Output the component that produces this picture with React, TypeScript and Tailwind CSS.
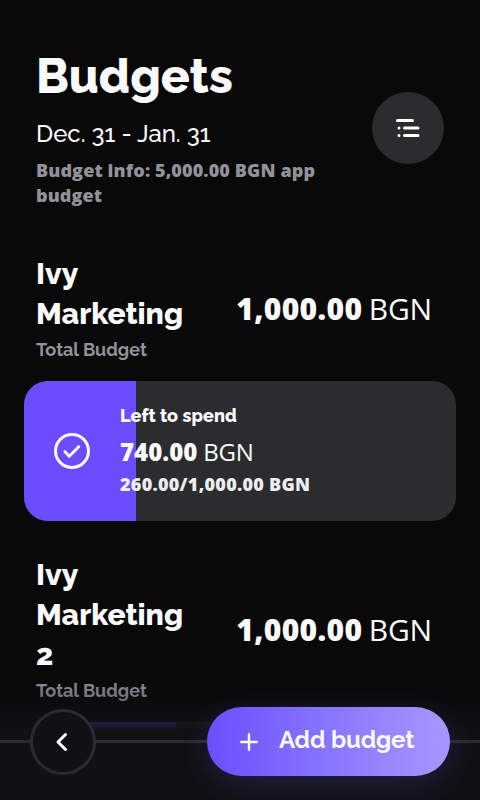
import type { ReactNode } from "react";

const RALE = "font-[Raleway,Lato,'Open_Sans',sans-serif]";
const OPEN = "font-['Open_Sans','Noto_Sans',sans-serif]";

function Amount({ value }: { value: string }) {
  return (
    <div className={`${OPEN} whitespace-nowrap pb-0.5 text-[30px] leading-[40px] text-[#fafafa]`}>
      <span className="font-extrabold tracking-[0.35px]">{value}</span>
      <span className="font-normal tracking-[-0.2px] [word-spacing:-1.2px]"> BGN</span>
    </div>
  );
}

function BudgetHeading({ lines, value }: { lines: string[]; value: string }) {
  return (
    <div className="flex items-center justify-between pl-9 pr-12">
      <div className="flex flex-col">
        <h2 className={`${RALE} text-[30px] font-extrabold leading-[40px] text-[#fafafa]`}>
          {lines.map((line) => (
            <span key={line} className="block">{line}</span>
          ))}
        </h2>
        <p className={`${RALE} pt-px text-[18px] font-bold leading-[30px] text-[#93929a]`}>Total Budget</p>
      </div>
      <Amount value={value} />
    </div>
  );
}

function Progress({ children, fill }: { children?: ReactNode; fill: string }) {
  return (
    <div className="mx-6 flex h-[140px] overflow-hidden rounded-[24px] bg-[#2b2c2e]">
      <div className={`${fill} h-full shrink-0 bg-[#6b4dff]`} />
      {children}
    </div>
  );
}

export default function App() {
  return (
    <div className="relative h-[800px] w-[480px] overflow-hidden bg-[#09090a]">
      <header className="flex h-[208px] items-start pl-9 pr-9 pt-[46px]">
        <div className="w-[300px]">
          <h1 className={`${RALE} text-[48px] font-extrabold leading-[60px] text-[#fafafa]`}>Budgets</h1>
          <p className={`${RALE} mt-[13px] text-[24px] font-medium leading-[30px] text-[#fafafa]`}>Dec. 31 - Jan. 31</p>
          <p className={`${OPEN} mt-[9px] text-[18px] font-extrabold leading-[25px] tracking-[0.12px] text-[#93929a]`}>
            Budget info: 5,000.00 BGN app budget
          </p>
        </div>
        <button aria-label="Reorder" className="ml-auto mt-[46px] flex h-[72px] w-[72px] items-center justify-center rounded-full bg-[#2b2c2e]">
          <svg width="36" height="36" viewBox="0 0 36 36" fill="none" stroke="#fff" strokeWidth="3" strokeLinecap="round">
            <path d="M7.5 10.5H16.5H22.5M14.5 18H28M14.5 25.5H28M9 18H9.01M9 25.5H9.01" />
          </svg>
        </button>
      </header>

      <main>
        <section className="pt-[46px]">
          <BudgetHeading lines={["Ivy", "Marketing"]} value="1,000.00" />
          <div className="h-4" />
          <Progress fill="w-[26%]">
            <div className="-ml-[26%] flex items-center text-[#fafafa]">
              <svg className="ml-[30px] shrink-0" width="36" height="36" viewBox="0 0 36 36" fill="none" stroke="currentColor" strokeWidth="3" strokeLinecap="round" strokeLinejoin="round">
                <circle cx="18" cy="18" r="16.5" />
                <path d="M11 18.7L15.3 23.2L24.7 13.7" />
              </svg>
              <div className="ml-[30px] whitespace-nowrap">
                <p className={`${RALE} text-[18px] font-extrabold leading-[24px] tracking-[0.05px]`}>Left to spend</p>
                <p className={`${OPEN} mt-[7px] text-[24px] leading-[33px]`}>
                  <span className="font-extrabold">740.00</span>
                  <span className="font-normal tracking-[-0.2px]"> BGN</span>
                </p>
                <p className={`${OPEN} mb-px mt-1 text-[18px] font-extrabold leading-[25px] tracking-[0.28px] text-[#eeedf0]`}>260.00/1,000.00 BGN</p>
              </div>
            </div>
          </Progress>
        </section>
        <section className="pt-[34px]">
          <BudgetHeading lines={["Ivy", "Marketing", "2"]} value="1,000.00" />
          <div className="h-4" />
          <Progress fill="w-[152px]" />
        </section>
      </main>

      <nav className="absolute inset-x-0 bottom-0 h-[132px] bg-[linear-gradient(to_bottom,rgba(17,17,20,0)_8px,rgba(17,17,20,0.25)_30px,rgba(17,17,20,0.78)_54px,#111114_63px)]">
        <div className="absolute inset-x-0 top-[72px] h-[3px] bg-[#2b2c2e]" />
        <div className="relative flex items-center justify-between pl-[30px] pr-[30px] pt-[39px]">
          <button aria-label="Back" className="flex h-[66px] w-[66px] items-center justify-center rounded-full border-[3px] border-[#2b2c2e] bg-[#111114]">
            <svg width="36" height="36" viewBox="0 0 36 36" fill="none" stroke="#fff" strokeWidth="3" strokeLinecap="round" strokeLinejoin="round">
              <path d="M20.5 10.5L13 18L20.5 25.5" />
            </svg>
          </button>
          <button className="flex h-[69px] w-[243px] items-center rounded-full bg-linear-to-r from-[#6b4dff] to-[#a897ff] text-[#fafafa] shadow-[0_8px_28px_rgba(107,77,255,0.2)]">
            <svg className="ml-6" width="36" height="36" viewBox="0 0 36 36" fill="none" stroke="currentColor" strokeWidth="2.4" strokeLinecap="round">
              <path d="M18 10.2V25.8M10.2 18H25.8" />
            </svg>
            <span className={`${RALE} ml-[12px] whitespace-nowrap pb-1 text-[24px] font-bold leading-[30px] tracking-[-0.15px]`}>Add budget</span>
          </button>
        </div>
      </nav>
    </div>
  );
}
